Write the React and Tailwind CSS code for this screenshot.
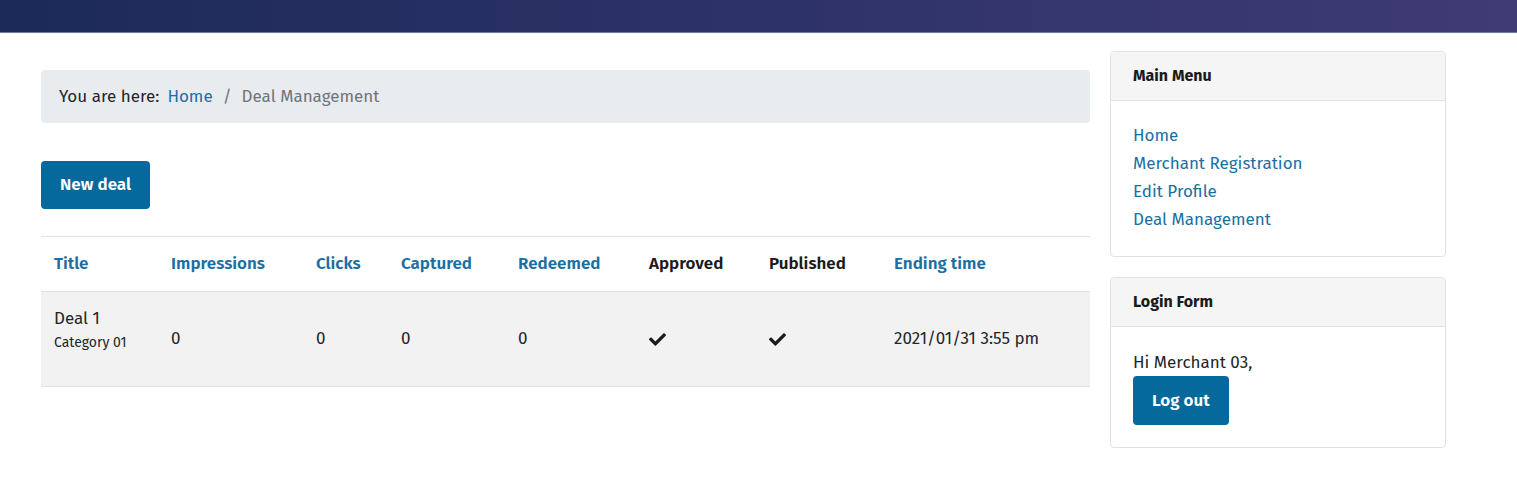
import React from 'react';

const COLUMNS = [
  { label: 'Title', link: true, w: 'w-[117px]' },
  { label: 'Impressions', link: true, w: 'w-[145px]' },
  { label: 'Clicks', link: true, w: 'w-[85px]' },
  { label: 'Captured', link: true, w: 'w-[117px]' },
  { label: 'Redeemed', link: true, w: 'w-[131px]' },
  { label: 'Approved', link: false, w: 'w-[120px]' },
  { label: 'Published', link: false, w: 'w-[125px]' },
  { label: 'Ending time', link: true, w: '' }
];

function Check() {
  return (
    <svg viewBox="0 0 512 512" className="w-[17px] h-[17px]" fill="#1b1b1b">
      <path d="M173.898 439.404l-166.4-166.4c-9.997-9.997-9.997-26.206 0-36.204l36.203-36.204c9.997-9.998 26.207-9.998 36.204 0L192 312.69 432.095 72.596c9.997-9.997 26.207-9.997 36.204 0l36.203 36.204c9.997 9.997 9.997 26.206 0 36.204l-294.4 294.401c-9.998 9.997-26.207 9.997-36.204-.001z" />
    </svg>
  );
}

function Card({ title, children }) {
  return (
    <div className="border border-[#dfe3e7] rounded-[4px] bg-white">
      <div className="h-[49px] flex items-center px-[22px] bg-[#f5f5f5] border-b border-[#dfe3e7] rounded-t-[4px] text-[16px] font-bold text-[#1b1b1b]">
        {title}
      </div>
      {children}
    </div>
  );
}

export default function App() {
  return (
    <div className="min-h-[487px] bg-white text-[#22262a] text-[17px]" style={{ fontFamily: '"Fira Sans", Lato, "Noto Sans", sans-serif' }}>
      <header className="h-[33px] bg-gradient-to-r from-[#1b2a59] to-[#3f3b74] border-b border-[#6e7ba3]" />

      <div className="flex gap-[20px] pl-[41px] pt-[18px]">
        <main className="w-[1049px] pt-[19px]">
          <nav className="h-[53px] flex items-center px-[18px] bg-[#e9ecef] rounded-[4px]">
            <span className="mr-[8px]">You are here:</span>
            <a className="text-[#1a6fa3]">Home</a>
            <span className="mx-[10px] text-[#6c757d]">/</span>
            <span className="text-[#6c757d]">Deal Management</span>
          </nav>

          <button className="mt-[38px] h-[48px] px-[19px] bg-[#05699c] text-white font-semibold rounded-[4px]">
            New deal
          </button>

          <table className="mt-[27px] w-full border-t border-[#dee2e6] border-collapse">
            <thead>
              <tr className="h-[55px] border-b border-[#dee2e6]">
                {COLUMNS.map(c => (
                  <th key={c.label} className={`${c.w} text-left font-semibold px-[13px] ${c.link ? 'text-[#1a6fa3]' : 'text-[#1b1b1b]'}`}>
                    {c.label}
                  </th>
                ))}
              </tr>
            </thead>
            <tbody>
              <tr className="h-[95px] bg-[#f2f2f2] border-b border-[#dee2e6]">
                <td className="px-[13px] align-top pt-[14px]">
                  <div className="leading-[26px]">Deal 1</div>
                  <div className="text-[14px] leading-[22px]">Category 01</div>
                </td>
                <td className="px-[13px]">0</td>
                <td className="px-[13px]">0</td>
                <td className="px-[13px]">0</td>
                <td className="px-[13px]">0</td>
                <td className="px-[13px]"><Check /></td>
                <td className="px-[13px]"><Check /></td>
                <td className="px-[13px]">2021/01/31 3:55 pm</td>
              </tr>
            </tbody>
          </table>
        </main>

        <aside className="w-[336px] flex flex-col gap-[20px]">
          <Card title="Main Menu">
            <ul className="px-[22px] pt-[21px] pb-[22px] leading-[28px] text-[#1a6fa3]">
              <li>Home</li>
              <li>Merchant Registration</li>
              <li>Edit Profile</li>
              <li>Deal Management</li>
            </ul>
          </Card>
          <Card title="Login Form">
            <div className="px-[22px] pt-[22px] pb-[22px]">
              <div className="leading-[27px]">Hi Merchant 03,</div>
              <button className="h-[49px] px-[19px] bg-[#05699c] text-white font-semibold rounded-[4px]">
                Log out
              </button>
            </div>
          </Card>
        </aside>
      </div>
    </div>
  );
}
